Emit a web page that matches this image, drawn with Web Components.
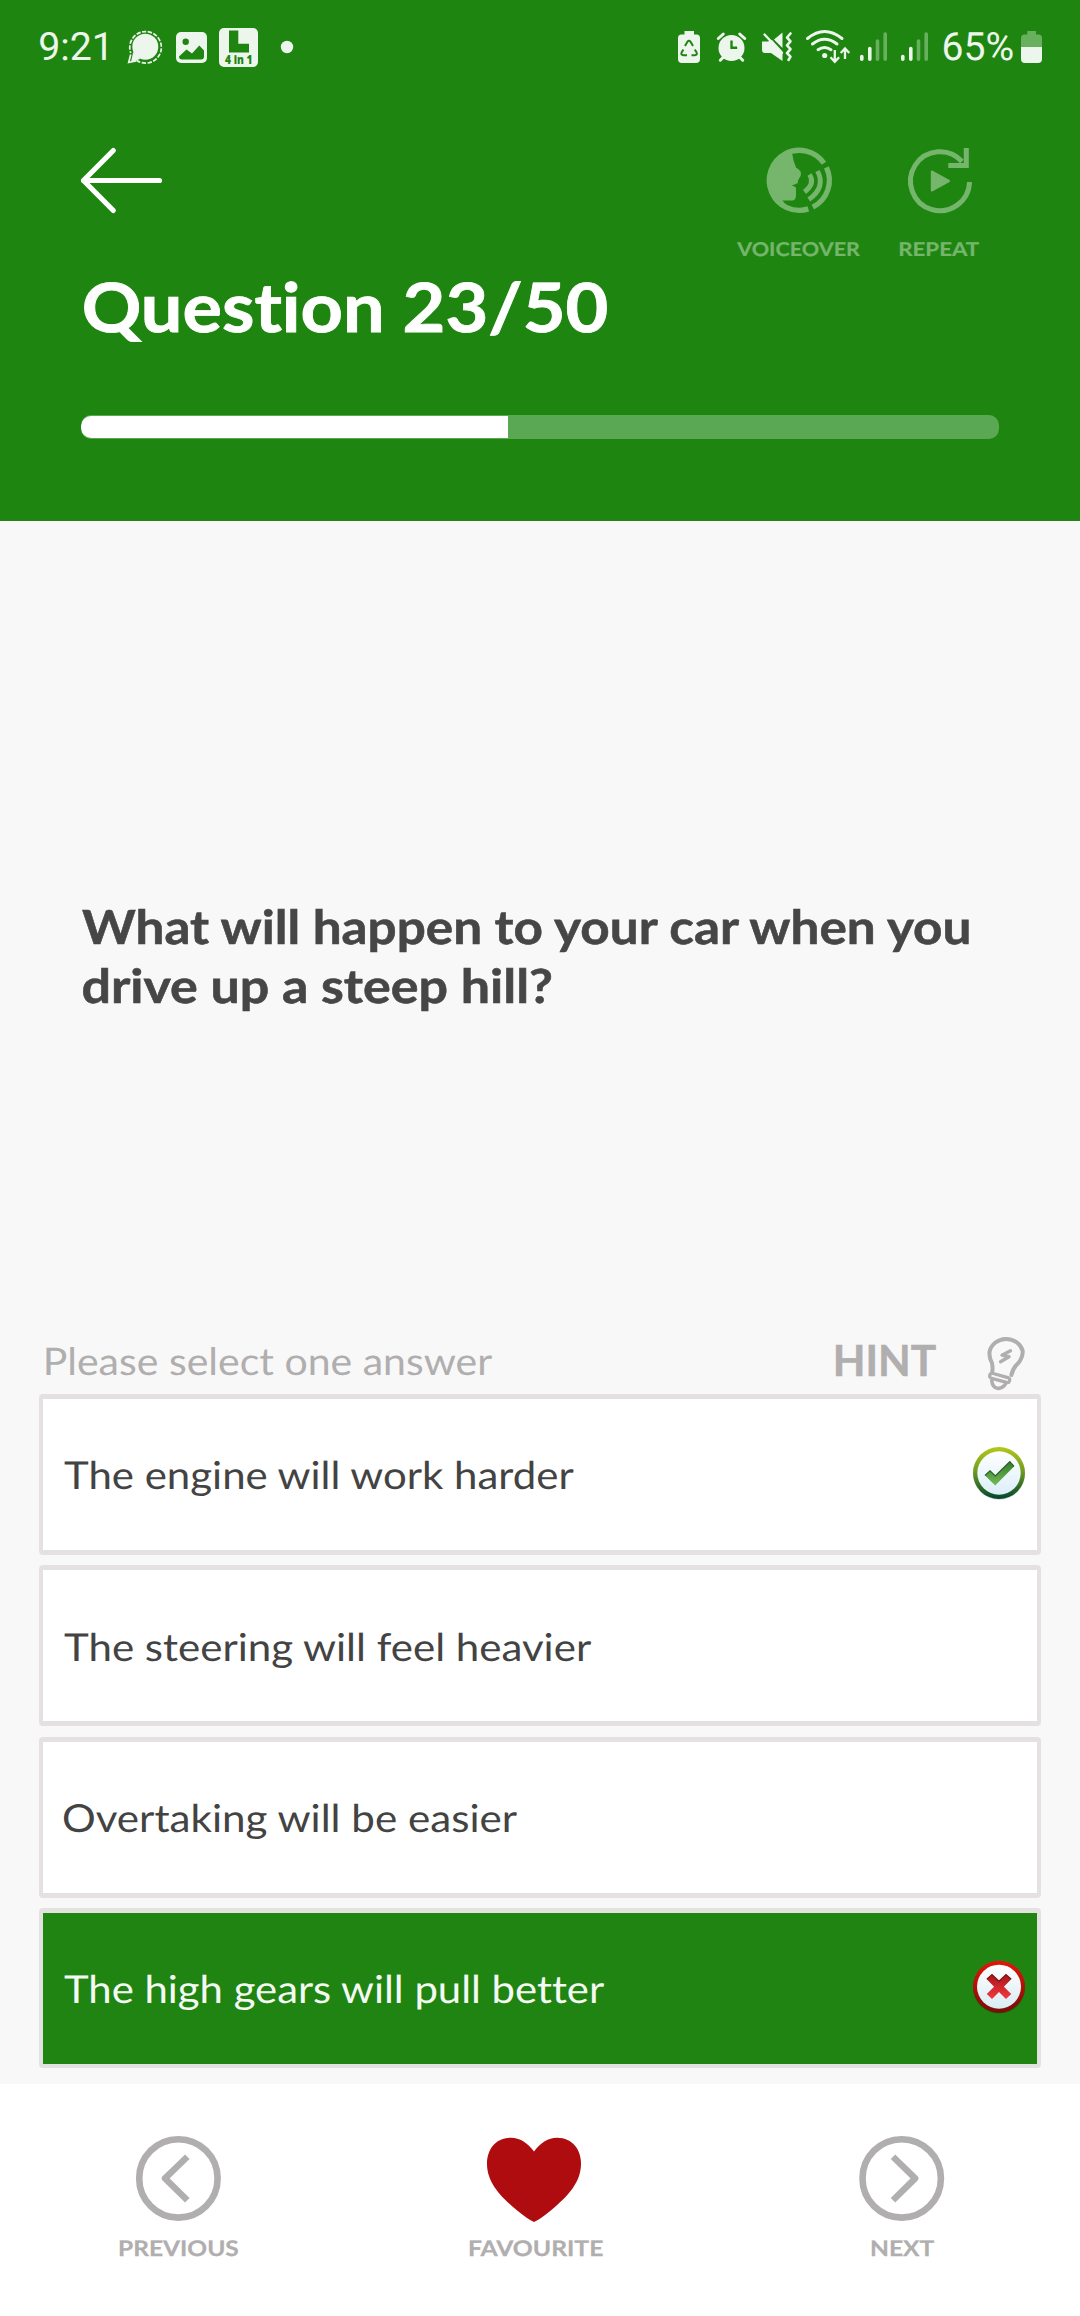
<!DOCTYPE html>
<html lang="en">
<head>
<meta charset="utf-8">
<title>Theory Test</title>
<style>
html, body { margin: 0; padding: 0; }
body { width: 1080px; height: 2316px; overflow: hidden; background: #f8f8f8; font-family: Lato, "Open Sans", sans-serif; }
</style>
</head>
<body>
<quiz-screen></quiz-screen>
<script>
/* Icons: view box [x, y, width, height] and markup */
const ICONS = {
  chat: [127, 10, 36, 80, `<circle cx="145.3" cy="46.7" r="13" fill="#edf6ec"/><path d="M131 62l2.2-10 7 7z" fill="#edf6ec"/><path d="M136.5 60.3A15.8 15.8 0 1 0 130.8 53" fill="none" stroke="#edf6ec" stroke-width="1.7" stroke-dasharray="4.3 1.5"/><path d="M130.7 54.5l-2 8 7.5-1.6" fill="none" stroke="#edf6ec" stroke-width="1.7"/>`],
  picture: [175, 10, 33, 80, `<rect x="176" y="32" width="31" height="31" rx="5" fill="#edf6ec"/><circle cx="185.7" cy="41.7" r="3.2" fill="#1f8511"/><path d="M179 56.5l7.5-7 5.5 4 7.3-8 4.7 5v6q0 3-3 3h-19q-3 0-3-3z" fill="#1f8511"/>`],
  plate: [218, 10, 41, 80, `<rect x="219" y="28" width="39" height="39" rx="5" fill="#edf6ec"/><path d="M229 30.5h9.3v13.2H249v8.8H229z" fill="#1f8511"/><text x="225" y="64" font-family="Open Sans, sans-serif" font-weight="800" font-size="11.5" textLength="27.5" lengthAdjust="spacingAndGlyphs" fill="#1f8511">4 in 1</text>`],
  dot: [280, 10, 14, 80, `<circle cx="287" cy="47" r="6.2" fill="#edf6ec"/>`],
  recycle: [677, 10, 24, 80, `<path d="M684.5 31h9.5v3.5h2.5q3.5 0 3.5 3.5v21q0 4-4 4h-14q-4 0-4-4V38q0-3.5 3.5-3.5h3z" fill="#edf6ec"/><path d="M685 46l2.4-4.200q1.600-2 3.200 0l2.400 4.200M694.800 49.500l1.800 3q1 2.500-1.800 2.700H691.500M687 55.200h-3.600q-2.800-.2-1.800-2.700l1.800-3" fill="none" stroke="#1f8511" stroke-width="2"/>`],
  alarm: [716, 10, 31, 80, `<circle cx="731.5" cy="48" r="13" fill="#edf6ec"/><path d="M718.3 38.500l5-4.500M744.700 38.500l-5-4.500M723.500 57l-3.200 3.200M739.500 57l3.200 3.200" stroke="#edf6ec" stroke-width="3" stroke-linecap="round"/><path d="M731.5 40.5v7.3h5.700" fill="none" stroke="#1f8511" stroke-width="2.4"/>`],
  mute: [761, 10, 32, 80, `<path d="M762 41.500h6l4-1.500 10.500 11.500V61L771 53h-6q-3 0-3-3zM774 39.500l8.500-7V48z" fill="#edf6ec"/><path d="M764.5 34.5L782 53" stroke="#edf6ec" stroke-width="2.4" stroke-linecap="round"/><path d="M790.5 33.500l-3.500 4 3.500 3.800-3.500 4 3.500 3.800-3.500 4 3.500 3.600-2 3.300" fill="none" stroke="#edf6ec" stroke-width="2.6" stroke-linejoin="round" stroke-linecap="round"/>`],
  wifi: [805, 10, 46, 80, `<g fill="none" stroke="#edf6ec" stroke-width="3" stroke-linecap="round"><path d="M807.5 38.500q17-14 34.500 0M812.500 44q12-9.500 24.500 0M818 49.700q6.500-4.500 13 0"/></g><circle cx="824.7" cy="55.5" r="2.6" fill="#edf6ec"/><path d="M834.8 50v11M830.500 57.300l4.300 4.500 4.300-4.500M845 59V49M840.700 53l4.300-4.500 4.300 4.500" fill="none" stroke="#edf6ec" stroke-width="2.300"/>`],
  bars: [859, 10, 29, 80, `<g stroke-width="3.600" stroke-linecap="round"><path d="M861.8 56.500v2.700M869.800 48.500v10.700" stroke="#edf6ec"/><path d="M877.500 41v18.200M885.200 34v25.200" stroke="#68b05e"/></g>`],
  battery: [1020, 10, 23, 80, `<path d="M1027.300 31h8.700v3.500h2.500q3.500 0 3.500 3.500v9h-21v-9q0-3.500 3.500-3.500h2.800z" fill="#68b05e"/><path d="M1021 47h21v12q0 4-4 4h-13q-4 0-4-4z" fill="#edf6ec"/>`],
  back: [78, 140, 88, 80, `<path d="M113.300 150.500L83.500 180.500 113.300 210.500M83.500 180.500H159.500" fill="none" stroke="#fff" stroke-width="5.200" stroke-linecap="round" stroke-linejoin="round"/>`],
  voice: [764, 144, 70, 72, `<g fill="none" stroke="#75b56c" stroke-width="5.300"><path d="M824 163.300A30 30 0 1 0 808.300 208.900M826.400 167.300A30 30 0 0 1 812.800 207.100"/><path d="M809.500 174.500q6 9-5 17.500M817.500 171q8.500 16.500-8.700 28.500" stroke-width="4.800"/></g><path d="M792 152.500l1.500 8 2.500 7q4.800 3.300 5 5.500 0 3-1.300 4.500-2.700 3.700-1.700 5.500l-6.500 2.700q4.500.5 4.500 2.500v6.500q0 5.500-3.500 5.800H782.500L789 208.500A30 30 0 0 1 769.300 180.300A30 30 0 0 1 792 151.500z" fill="#75b56c"/>`],
  repeat: [904, 144, 70, 72, `<path d="M968.500 182A29.500 29.500 0 1 1 961 161.500" fill="none" stroke="#75b56c" stroke-width="5"/><path d="M965.300 148v17.500H947.300" fill="none" stroke="#75b56c" stroke-width="5"/><path d="M930.800 171.500v19l17.200-9.500z" fill="#75b56c" stroke="#75b56c" stroke-width="2" stroke-linejoin="round"/>`],
  bulb: [984, 1331, 44, 62, `<g fill="none" stroke="#b0aeae" stroke-width="4" stroke-linecap="round" stroke-linejoin="round"><path d="M992.300 1371.500q.700-5-.500-9-2.700-4.500-2.300-10.500a17 16 0 0 1 33.200-1c.3 6-1.800 9-4.800 12.500q-5 4.500-6.500 11.500"/><path d="M992.300 1373.300l15.500 4.300q2.500 1 1.800 3.300-.7 2-3 1.500l-15-4q-2.400-.8-1.900-3 .6-2.300 2.600-2.100z" stroke-width="3.200"/><path d="M991.700 1380.800q1 6.800 5.500 7.500 5 .7 8.500-4.500" stroke-width="3.600"/><path d="M1010.500 1350.700l-8.500 4.500 7 1.500-8.500 5" stroke-width="3.400"/></g>`],
  right: [970, 1444, 58, 58, `<defs><linearGradient id="a" x2="0" y2="1"><stop stop-color="#b3c91b"/><stop offset=".45" stop-color="#709e20"/><stop offset="1" stop-color="#00462e"/></linearGradient><linearGradient id="b" x2="0" y2="1"><stop stop-color="#fff"/><stop offset="1" stop-color="#dceff9"/></linearGradient><linearGradient id="c" x2="0" y2="1"><stop stop-color="#347d29"/><stop offset="1" stop-color="#74bb58"/></linearGradient></defs><circle cx="999" cy="1473.800" r="26" fill="#000" opacity=".18"/><circle cx="999" cy="1473" r="26" fill="url(#a)"/><circle cx="999" cy="1473" r="21.700" fill="url(#b)"/><path d="M985 1475.500l5-4.700 5.300 5.200 14.500-14.300 4.200 4.800-18.800 19z" fill="url(#c)"/><path d="M985 1475.500l5-4.700 5.300 5.200 14.500-14.300 4.200 4.800" fill="none" stroke="#285f24" stroke-width="1.200"/>`],
  wrong: [970, 1958, 58, 58, `<defs><linearGradient id="a" x2="0" y2="1"><stop stop-color="#e41609"/><stop offset="1" stop-color="#790b07"/></linearGradient><linearGradient id="b" x2="0" y2="1"><stop stop-color="#fff"/><stop offset="1" stop-color="#d9ecf4"/></linearGradient><linearGradient id="c" x2="0" y2="1"><stop stop-color="#a91419"/><stop offset="1" stop-color="#f23a40"/></linearGradient></defs><circle cx="999" cy="1987.500" r="26" fill="#000" opacity=".25"/><circle cx="999" cy="1986.700" r="26" fill="url(#a)"/><circle cx="999" cy="1986.700" r="22" fill="url(#b)"/><path d="M992 1974.500l7 6.800 7-6.800 5.200 4.800-7.300 7.400 7.300 7.200-5.200 5-7-7-7 7-5.200-5 7.300-7.200-7.300-7.400z" fill="url(#c)"/><path d="M986.800 1979.300l5.200-4.800 7 6.800 7-6.800 5.200 4.800" fill="none" stroke="#7d1517" stroke-width="1.200"/>`],
  previous: [134, 2134, 89, 89, `<circle cx="178.400" cy="2178.400" r="39.200" fill="none" stroke="#b0aeae" stroke-width="6.600"/><path d="M187.300 2156.700L165 2178.400 187.300 2200.200" fill="none" stroke="#b0aeae" stroke-width="6.400" stroke-linejoin="round"/>`],
  next: [857, 2134, 89, 89, `<circle cx="901.700" cy="2178.400" r="39.200" fill="none" stroke="#b0aeae" stroke-width="6.600"/><path d="M893 2156.700L915.200 2178.400 893 2200.200" fill="none" stroke="#b0aeae" stroke-width="6.400" stroke-linejoin="round"/>`],
  heart: [487, 2134, 96, 89, `<path d="M534 2151.500C541 2142.500 548 2137.700 557 2137.700C573 2137.700 581 2150 581 2164C581 2185 563 2200 552 2209.500Q540 2219.500 534 2222Q528 2219.500 516 2209.500C505 2200 487 2185 487 2164C487 2150 495 2137.700 511 2137.700C520 2137.700 527 2142.500 534 2151.500Z" fill="#ae0c0e"/>`]
};

class UiIcon extends HTMLElement {
  connectedCallback() {
    if (this.shadowRoot) return;
    const [x, y, w, h, art] = ICONS[this.getAttribute('name')];
    this.attachShadow({ mode: 'open' }).innerHTML =
      `<style>:host{display:block;flex:none;width:${w}px;height:${h}px}svg{display:block;overflow:visible}</style>
       <svg width="${w}" height="${h}" viewBox="${x} ${y} ${w} ${h}">${art}</svg>`;
  }
}
customElements.define('ui-icon', UiIcon);

/* A line of text whose box is its cap height by the given ink width */
const pen = document.createElement('canvas').getContext('2d');
const CAP = { Lato: 0.7165, Roboto: 0.711 };
class FitText extends HTMLElement {
  connectedCallback() {
    if (this.shadowRoot) return;
    const size = +this.getAttribute('size');
    const weight = this.getAttribute('weight') || 400;
    const family = this.getAttribute('family') || 'Lato';
    const width = +this.getAttribute('w');
    const cap = size * CAP[family];
    const bold = +weight > 400 ? size * 0.012 : 0;
    this.attachShadow({ mode: 'open' }).innerHTML =
      `<style>:host{display:block;flex:none;width:${width}px;height:${cap}px;font:${weight} ${size}px/${cap}px "${family}",sans-serif;white-space:pre;font-variant-ligatures:none;text-rendering:geometricPrecision;-webkit-text-stroke:${bold}px currentColor}
       span{display:inline-block;transform-origin:0 0}i{display:inline-block;width:0;height:0}</style><span><slot></slot><i></i></span>`;
    /* side bearings come from the first and last glyphs, the advance and baseline from layout */
    pen.font = `${weight} ${size * 10}px "${family}"`;
    const s = this.textContent;
    const first = pen.measureText(s[0]), last = pen.measureText(s[s.length - 1]);
    const lead = -first.actualBoundingBoxLeft / 10;
    const trail = (last.width - last.actualBoundingBoxRight) / 10;
    const span = this.shadowRoot.querySelector('span');
    const probe = this.shadowRoot.querySelector('i');
    const advance = span.getBoundingClientRect().width;
    const baseline = probe.getBoundingClientRect().bottom - this.getBoundingClientRect().top;
    probe.remove();
    const sx = width / (advance - lead - trail);
    span.style.transform = `translate(${-lead * sx}px,${cap - baseline}px) scaleX(${sx})`;
  }
}
customElements.define('fit-text', FitText);

function define(name, markup) {
  const t = document.createElement('template');
  t.innerHTML = markup;
  customElements.define(name, class extends HTMLElement {
    constructor() {
      super();
      this.attachShadow({ mode: 'open' }).append(t.content.cloneNode(true));
    }
  });
}

define('status-bar', `
<style>
:host{display:flex;justify-content:space-between;align-items:center;height:80px;padding:10px 37px 0 40px;color:#edf6ec}
div{display:flex;align-items:center}
fit-text{margin-bottom:8px}
</style>
<div><fit-text family="Roboto" size="39" w="66">9:21</fit-text>
<ui-icon name="chat" style="margin-left:21px"></ui-icon>
<ui-icon name="picture" style="margin-left:12px"></ui-icon>
<ui-icon name="plate" style="margin-left:10px"></ui-icon>
<ui-icon name="dot" style="margin-left:21px"></ui-icon></div>
<div><ui-icon name="recycle"></ui-icon>
<ui-icon name="alarm" style="margin-left:15px"></ui-icon>
<ui-icon name="mute" style="margin-left:14px"></ui-icon>
<ui-icon name="wifi" style="margin-left:12px"></ui-icon>
<ui-icon name="bars" style="margin-left:8px"></ui-icon>
<ui-icon name="bars" style="margin-left:12px"></ui-icon>
<fit-text family="Roboto" size="39" w="69" style="margin-left:15px">65%</fit-text>
<ui-icon name="battery" style="margin-left:7px"></ui-icon></div>`);

define('icon-action', `
<style>:host{display:flex;flex-direction:column;align-items:center;flex:none}</style>
<slot name="icon"></slot><slot></slot>`);

define('progress-meter', `
<style>
:host{display:flex;align-items:center;width:918px;height:24px;border-radius:10px;background:#5ba854;overflow:hidden}
i{width:427px;height:22px;background:#fff;border-radius:10px 0 0 10px}
</style><i></i>`);

define('quiz-header', `
<style>
:host{display:flex;flex-direction:column;box-sizing:border-box;height:521px;background:#1f8511;color:#fff;border-bottom:1px solid #2c7d20}
.row{display:flex;justify-content:space-between;height:143px;margin-top:50px;padding:0 101px 0 78px}
.actions{display:flex;gap:40px;padding-top:4px;color:#75b56c}
.actions fit-text{margin-top:25.500px}
.title{margin-left:83.500px}
progress-meter{margin:83px 0 0 81px}
</style>
<status-bar></status-bar>
<div class="row"><ui-icon name="back"></ui-icon>
<div class="actions">
<icon-action><ui-icon slot="icon" name="voice"></ui-icon><fit-text size="19" weight="700" w="123">VOICEOVER</fit-text></icon-action>
<icon-action><ui-icon slot="icon" name="repeat"></ui-icon><fit-text size="19" weight="700" w="79">REPEAT</fit-text></icon-action>
</div></div>
<fit-text class="title" size="68" weight="700" w="523">Question 23/50</fit-text>
<progress-meter></progress-meter>`);

define('answer-option', `
<style>
:host{display:flex;justify-content:space-between;align-items:flex-start;box-sizing:border-box;width:1002px;height:161px;padding:0 9px 0 21px;border:solid #e5e1e2;border-width:5px 4px;border-radius:4px;background:#fff;color:#434343}
:host([selected]){height:160px;border-bottom-width:4px;border-color:#e3e2e0;background:#208412;color:#f4faf3}
.label{padding-top:62.400px}
.mark{padding-top:45px}
</style>
<div class="label"><slot></slot></div><div class="mark"><slot name="mark"></slot></div>`);

define('quiz-body', `
<style>
:host{display:flex;flex-direction:column;height:1563px;background:#f8f8f8}
.question{display:flex;flex-direction:column;gap:25.300px;margin:389.300px 0 0 81.500px;height:425px;color:#464646}
.question fit-text+fit-text{margin-left:1px}
.tools{display:flex;height:58.700px;padding:0 52px 0 45.800px;color:#b0aeae;align-items:flex-start}
.tools .ask{margin-top:12.600px}.tools .hint{margin:9.700px 48px 0 auto}
.tools ui-icon{margin-top:-4px}
.list{display:flex;flex-direction:column;gap:10.330px;margin-left:39px}
</style>
<div class="question"><fit-text size="47" weight="700" w="887">What will happen to your car when you</fit-text><fit-text size="47" weight="700" w="468">drive up a steep hill?</fit-text></div>
<div class="tools"><fit-text class="ask" size="38" w="446">Please select one answer</fit-text><fit-text class="hint" size="43" weight="700" w="100">HINT</fit-text><ui-icon name="bulb"></ui-icon></div>
<div class="list">
<answer-option><fit-text size="38.500" w="509.500">The engine will work harder</fit-text><ui-icon slot="mark" name="right"></ui-icon></answer-option>
<answer-option><fit-text size="38.500" w="527">The steering will feel heavier</fit-text></answer-option>
<answer-option><fit-text size="38.500" w="453">Overtaking will be easier</fit-text></answer-option>
<answer-option selected><fit-text size="38.500" w="540">The high gears will pull better</fit-text><ui-icon slot="mark" name="wrong"></ui-icon></answer-option>
</div>`);

define('quiz-nav', `
<style>
:host{display:flex;justify-content:space-between;box-sizing:border-box;height:232px;padding:50px 134px 0 119.500px;background:#fff;color:#b0aeae}
fit-text{margin-top:17.500px}
icon-action:nth-of-type(2){margin-left:10px}
icon-action:nth-of-type(2) fit-text{margin-left:3px}
icon-action:nth-of-type(3){margin-left:35px}
icon-action:nth-of-type(3) fit-text{margin-left:2px}
</style>
<icon-action><ui-icon slot="icon" name="previous"></ui-icon><fit-text size="21.500" weight="700" w="118">PREVIOUS</fit-text></icon-action>
<icon-action><ui-icon slot="icon" name="heart"></ui-icon><fit-text size="21.500" weight="700" w="132.500">FAVOURITE</fit-text></icon-action>
<icon-action><ui-icon slot="icon" name="next"></ui-icon><fit-text size="21.500" weight="700" w="62">NEXT</fit-text></icon-action>`);

define('quiz-screen', `
<style>:host{display:flex;flex-direction:column;width:1080px;height:2316px}quiz-header,quiz-body,quiz-nav{flex:none}</style>
<quiz-header></quiz-header><quiz-body></quiz-body><quiz-nav></quiz-nav>`);
</script>
</body>
</html>
